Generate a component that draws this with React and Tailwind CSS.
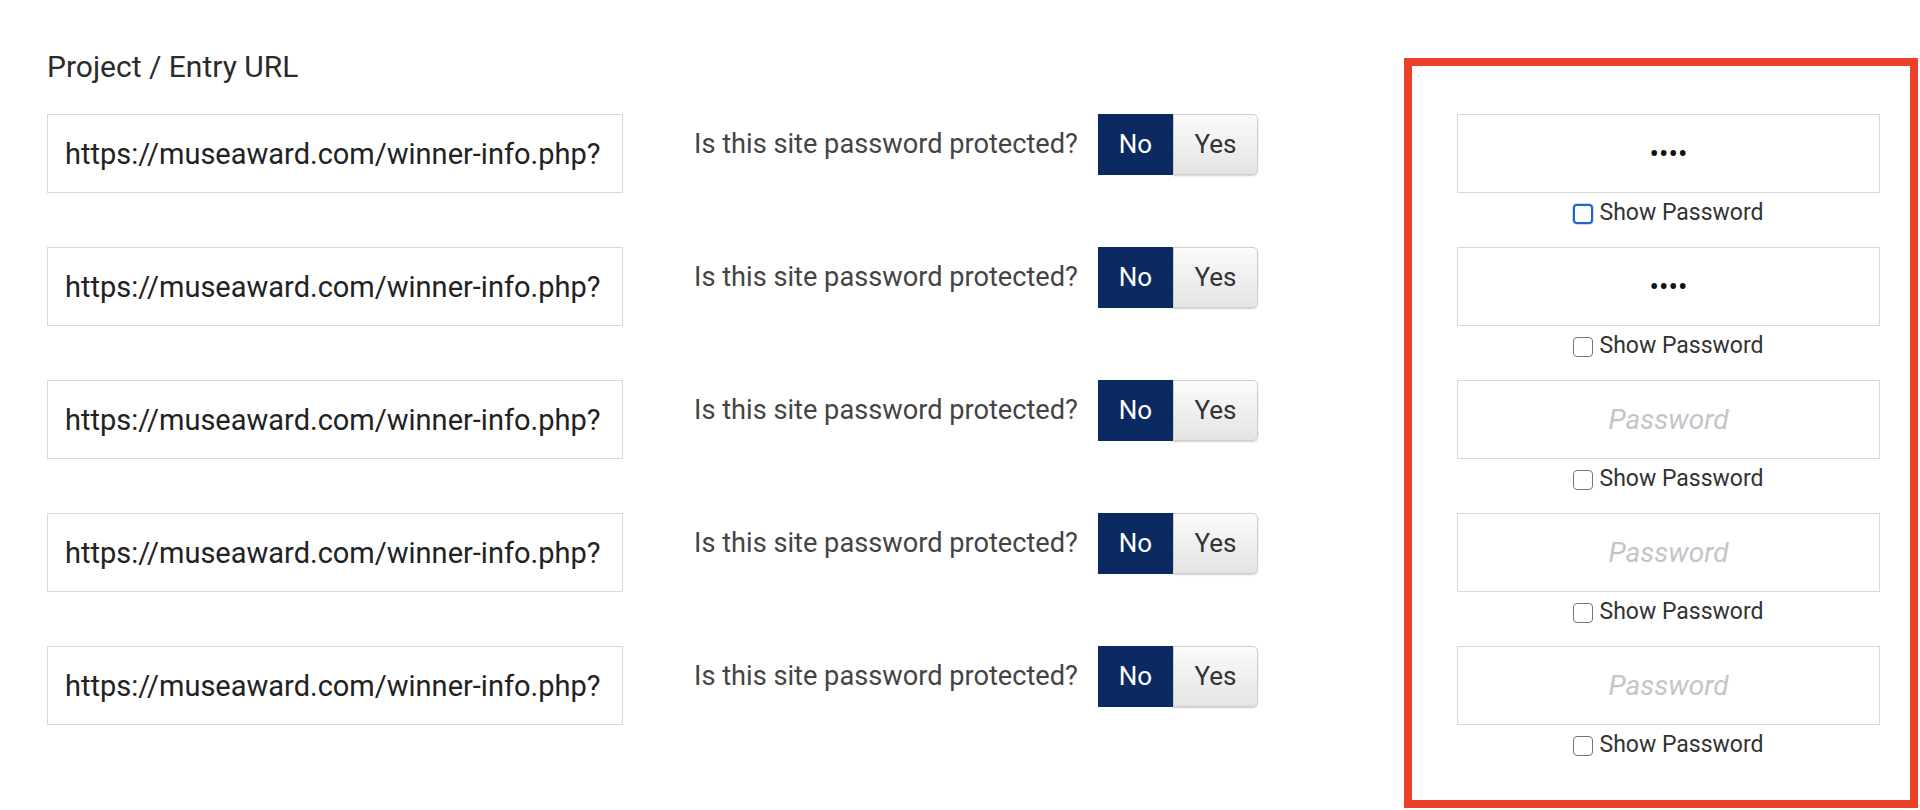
import React from "react";

const rows = [
  { pw: "abcd" },
  { pw: "abcd" },
  { pw: "" },
  { pw: "" },
  { pw: "" },
];

const URL_VALUE = "https://museaward.com/winner-info.php?";

function Toggle() {
  return (
    <div className="flex h-[61px]">
      <button className="w-[75px] h-[61px] bg-[#0c2a62] text-white text-[26px] flex items-center justify-center">
        No
      </button>
      <button className="w-[85px] h-[61px] bg-gradient-to-b from-[#fbfbfb] to-[#e4e4e4] border border-[#cfcfcf] rounded-r-[5px] shadow-[0_1px_2px_rgba(0,0,0,0.2)] text-[#333] text-[26px] flex items-center justify-center">
        Yes
      </button>
    </div>
  );
}

function App() {
  return (
    <div className="w-[1920px] h-[810px] bg-white flex font-[family-name:Roboto,sans-serif] overflow-hidden">
      {/* left side: urls + toggles */}
      <div className="w-[1404px] shrink-0 pl-[47px] pt-[49px]">
        <h2 className="text-[30px] leading-[36px] font-normal text-[#2b2b2b] mb-[29px]">
          Project / Entry URL
        </h2>
        <div className="flex flex-col gap-[54px]">
          {rows.map((r, i) => (
            <div key={i} className="flex items-start">
              <input
                type="text"
                defaultValue={URL_VALUE}
                className="w-[576px] h-[79px] border border-[#d9d9d9] pl-[17px] pr-[4px] text-[29px] text-[#222] outline-none"
              />
              <div className="ml-[71px] w-[404px] h-[61px] flex items-center text-[27.2px] text-[#444]">
                Is this site password protected?
              </div>
              <Toggle />
            </div>
          ))}
        </div>
      </div>

      {/* right side: passwords */}
      <div className="mt-[58px] w-[514px] h-[750px] border-8 border-[#ea4128] pl-[45px] pt-[48px]">
        <div className="flex flex-col gap-[19px]">
          {rows.map((r, i) => (
            <div key={i} className="w-[423px] flex flex-col">
              <input
                type="password"
                defaultValue={r.pw}
                placeholder="Password"
                className="w-[423px] h-[79px] border border-[#d9d9d9] text-center text-[28px] text-[#111] outline-none placeholder:italic placeholder:text-[#c4c4ca]"
              />
              <label className="mt-[6px] h-[29px] flex items-center justify-center gap-[6px] text-[23px] text-[#333]">
                <input
                  type="checkbox"
                  className={
                    i === 0
                      ? "appearance-none w-[20px] h-[20px] border-2 border-[#1f63d4] rounded-[4px] bg-white ring-1 ring-[#cfd8e8]"
                      : "appearance-none w-[20px] h-[20px] border border-[#767676] rounded-[4px] bg-white"
                  }
                />
                Show Password
              </label>
            </div>
          ))}
        </div>
      </div>
    </div>
  );
}

export default App;
